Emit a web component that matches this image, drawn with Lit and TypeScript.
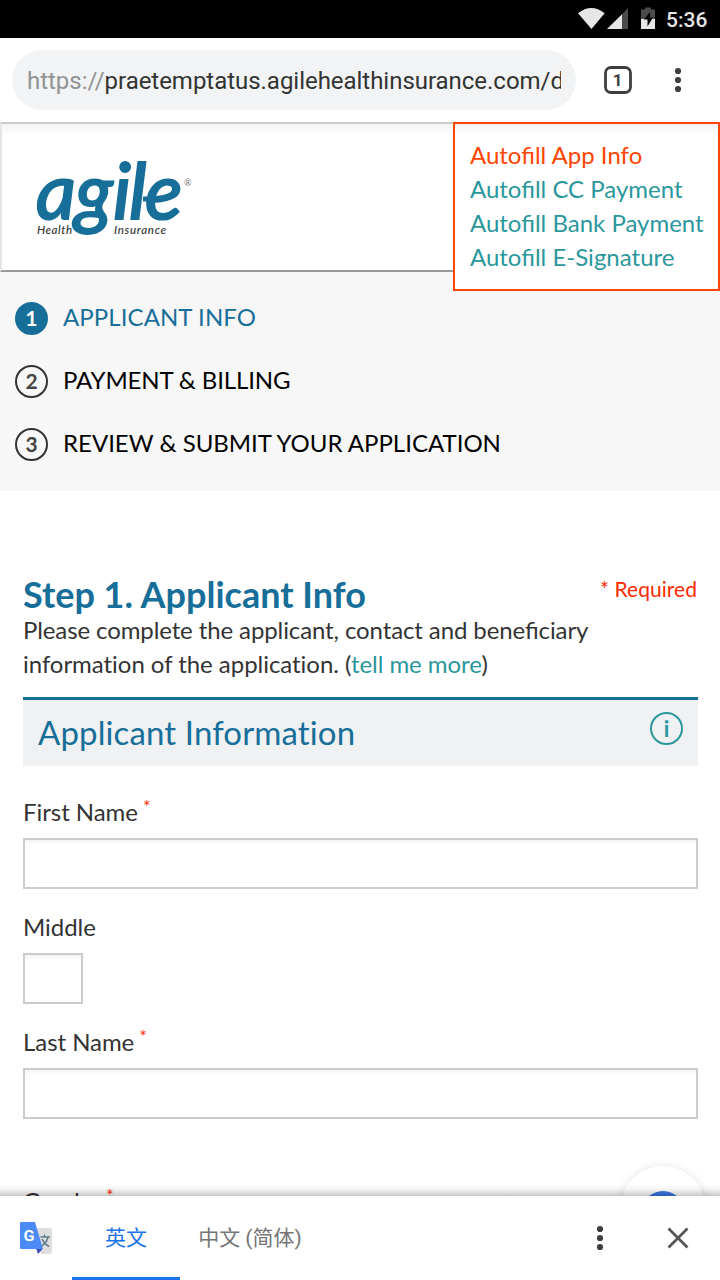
import { LitElement, html, css, svg, nothing } from "lit";
import { customElement, property } from "lit/decorators.js";

const dots = svg`<circle cx="15" cy="6" r="3.1"/><circle cx="15" cy="15" r="3.1"/><circle cx="15" cy="24" r="3.1"/>`;

@customElement("status-bar")
class StatusBar extends LitElement {
  static styles = css`
    :host { display: flex; height: 38px; background: #000; color: #e6e6e6; justify-content: flex-end; align-items: center; padding-right: 12px; font: 500 21px/38px Roboto, sans-serif; flex: none; }
    svg { display: block; margin-right: 10px; }
    .time { padding-top: 2px; width: 42px; white-space: nowrap; }
  `;
  render() {
    return html`
      <svg width="78" height="38" viewBox="578 0 78 38">
        <path d="M578 13.3Q591.3 2.8 604.7 13.3L591.5 29Z" fill="#e6e6e6"/>
        <path d="M622 14.2V29H607Z" fill="#e6e6e6"/>
        <path d="M622 14.2L628 8V29H622Z" fill="#4b4b4b"/>
        <path d="M645 7.5h6V9.5h4V19H641V9.5h4Z" fill="#4b4b4b"/>
        <path d="M641 19h14V29H641Z" fill="#e6e6e6"/>
        <path d="M650 12v5.500h3l-5.500 9v-7h-3.500Z" fill="#000"/>
      </svg>
      <span class="time">5:36</span>`;
  }
}

@customElement("address-bar")
class AddressBar extends LitElement {
  static styles = css`
    :host { display: flex; height: 84px; box-sizing: border-box; padding-left: 12px; align-items: center; flex: none; background: #fff; }
    .pill { width: 564px; height: 60px; box-sizing: border-box; border-radius: 30px; background: #f1f3f4; padding: 0 15px; font: 24px/62px Roboto, sans-serif; color: #333; }
    .url { display: block; overflow: hidden; white-space: nowrap; width: 534px; letter-spacing: -0.03px; }
    .scheme { color: #929394; }
    .tabs { margin-left: 27px; }
    .menu { margin-left: 30px; fill: #3c4043; }
  `;
  render() {
    return html`
      <div class="pill"><span class="url"><span class="scheme">https://</span>praetemptatus.agilehealthinsurance.com/d</span></div>
      <svg class="tabs" width="30" height="30" viewBox="0 0 30 30">
        <rect x="2.5" y="2.5" width="25" height="25" rx="5.500" fill="none" stroke="#3c4043" stroke-width="2.8"/>
        <text x="14.6" y="20.6" text-anchor="middle" font-family="Roboto, sans-serif" font-weight="700" font-size="17" fill="#3c4043">1</text>
      </svg>
      <svg class="menu" width="30" height="30" viewBox="0 0 30 30">${dots}</svg>`;
  }
}

@customElement("site-header")
class SiteHeader extends LitElement {
  static styles = css`
    :host { display: block; position: relative; height: 150px; box-sizing: border-box; border-top: 2px solid #cbcbcb; border-left: 2px solid #e5e5e5; border-bottom: 2px solid #999; background: linear-gradient(#f4f4f4, #fff 12px); flex: none; }
    .logo { display: block; margin: 26px 0 0 28px; overflow: visible; }
    .links { position: absolute; z-index: 1; right: 0; top: -2px; width: 267px; height: 169px; box-sizing: border-box; border: 2px solid #ff4500; background: linear-gradient(#f4f4f4, #fff 10px); padding: 14px 15px; display: flex; flex-direction: column; }
    .links a { color: #2a979d; line-height: 34px; white-space: nowrap; font-size: 24px; }
    .links .current { color: #ff4500; }
  `;
  render() {
    return html`
      <svg class="logo" width="180" height="96" viewBox="30 150 180 96" font-family="Lato, sans-serif" font-style="italic">
        <g fill="#176f99" stroke="#176f99" stroke-width="2.200" font-size="78" font-weight="400">
          <text x="36" y="219">a</text><text x="75" y="219">g</text><text x="113" y="219">i</text><text x="129" y="219">l</text><text x="145" y="219">e</text>
        </g>
        <path d="M143 199H154" fill="none" stroke="#176f99" stroke-width="5"/>
        <g fill="#333" font-size="11.5" font-weight="500">
          <text x="37" y="234" textLength="35">Health</text>
          <text x="114" y="234" textLength="52">Insurance</text>
        </g>
        <text x="184" y="186" font-size="9" font-style="normal" fill="#777">®</text>
      </svg>
      <nav class="links">
        <a class="current">Autofill App Info</a><a>Autofill CC Payment</a><a>Autofill Bank Payment</a><a>Autofill E-Signature</a>
      </nav>`;
  }
}

@customElement("step-list")
class StepList extends LitElement {
  static styles = css`
    :host { display: flex; flex-direction: column; gap: 30px; height: 219px; box-sizing: border-box; padding: 30px 15px 0; background: #f7f7f7; color: #000; flex: none; }
    .step { display: flex; gap: 15px; height: 33px; font-size: 24px; line-height: 29px; white-space: nowrap; }
    .num { width: 33px; height: 33px; box-sizing: border-box; border: 2px solid #333; border-radius: 50%; text-align: center; font-size: 21px; font-weight: 700; line-height: 28px; color: #444; }
    .on { color: #176f99; letter-spacing: 0.08px; }
    .on .num { background: #176f99; border-color: #176f99; color: #fff; }
    .mid { letter-spacing: -0.12px; }
  `;
  render() {
    return html`${["APPLICANT INFO", "PAYMENT & BILLING", "REVIEW & SUBMIT YOUR APPLICATION"].map(
      (t, i) => html`<div class="step ${["on", "mid", ""][i]}"><span class="num">${i + 1}</span><span>${t}</span></div>`
    )}`;
  }
}

@customElement("text-field")
class TextField extends LitElement {
  @property() label = "";
  @property({ type: Boolean }) required = false;
  @property({ type: Boolean }) short = false;
  static styles = css`
    :host { display: block; height: 115px; flex: none; }
    .label { display: flex; height: 42px; line-height: 32px; font-size: 24px; gap: 5px; letter-spacing: -0.05px; }
    .star { color: #ff2a00; font-size: 18px; line-height: 21px; }
    .box { height: 51px; box-sizing: border-box; border: 2px solid #ccc; background: linear-gradient(#f4f4f4, #fff 5px); }
    .short { width: 60px; }
  `;
  render() {
    return html`
      <div class="label"><span>${this.label}</span>${this.required ? html`<span class="star">*</span>` : nothing}</div>
      <div class="box ${this.short ? "short" : ""}"></div>`;
  }
}

@customElement("application-form")
class ApplicationForm extends LitElement {
  static styles = css`
    :host { display: flex; flex-direction: column; flex: 1; min-height: 0; overflow: hidden; padding: 81px 22px 0 23px; color: #333; }
    .top { display: flex; justify-content: space-between; height: 41px; flex: none; }
    .title { font-size: 36px; font-weight: 700; line-height: 44px; color: #176f99; }
    .req { font-size: 21px; line-height: 34px; color: #ff2a00; padding-right: 1px; letter-spacing: 0.05px; }
    .intro { height: 84px; flex: none; font-size: 24px; line-height: 34px; white-space: nowrap; letter-spacing: -0.04px; }
    .first { letter-spacing: -0.11px; font-feature-settings: "liga" 1; }
    .more { color: #2a979d; }
    .section { display: flex; justify-content: space-between; height: 69px; box-sizing: border-box; border-top: 3px solid #176f99; background: #f0f1f3; padding: 0 15px; margin-bottom: 30px; color: #176f99; font-size: 33px; line-height: 64px; letter-spacing: 0.12px; flex: none; }
    .info { margin-top: 12px; width: 33px; height: 33px; box-sizing: border-box; border: 2px solid #2a979d; border-radius: 50%; color: #2a979d; text-align: center; font-size: 22px; font-weight: 700; line-height: 29px; }
    .gender { margin-top: 44px; }
  `;
  render() {
    return html`
      <div class="top"><span class="title">Step 1. Applicant Info</span><span class="req">* Required</span></div>
      <div class="intro"><span class="first">Please complete the applicant, contact and beneficiary</span><br>information of the application. (<span class="more">tell me more</span>)</div>
      <div class="section"><span>Applicant Information</span><span class="info">i</span></div>
      <text-field label="First Name" required></text-field>
      <text-field label="Middle" short></text-field>
      <text-field label="Last Name" required></text-field>
      <text-field class="gender" label="Gender" required></text-field>`;
  }
}

@customElement("translate-bar")
class TranslateBar extends LitElement {
  static styles = css`
    :host { display: flex; position: relative; height: 84px; flex: none; background: #fff; font: 21px/84px Roboto, "Noto Sans CJK SC", sans-serif; color: #757575; }
    .shade { position: absolute; left: 0; right: 0; top: -11px; height: 11px; background: linear-gradient(rgba(0,0,0,0), rgba(0,0,0,.06) 45%, rgba(0,0,0,.22)); }
    .icon { margin: 25px 18px 0 19px; display: block; }
    .tab { box-sizing: border-box; width: 108px; height: 84px; text-align: center; white-space: nowrap; }
    .on { color: #1a73e8; border-bottom: 3px solid #1a73e8; }
    .other { width: 140px; }
    .menu { margin: 27px 0 0 auto; fill: #3c4043; }
    .close { margin: 27px 27px 0 48px; }
  `;
  render() {
    return html`
      <div class="shade"></div>
      <svg class="icon" width="35" height="35" viewBox="19 1221 35 35">
        <path d="M34 1228h16q2 0 2 2v22q0 2-2 2H41Z" fill="#dedede"/>
        <path d="M36 1248.5h7l-5 5.5Z" fill="#3f51b5"/>
        <path d="M40.500 1237h9.500M44.500 1234.500v2.500M48 1237q-1 5.500-7 9.500M42 1239q2 4.500 7 7.500" fill="none" stroke="#607d8b" stroke-width="1.500"/>
        <path d="M21 1222h14l8 27H21q-1 0-1-1v-25q0-1 1-1Z" fill="#4c8bf5"/>
        <text x="23.5" y="1240.500" font-family="Roboto, sans-serif" font-size="15" font-weight="700" fill="#fff" textLength="11" lengthAdjust="spacingAndGlyphs">G</text>
      </svg>
      <div class="tab on">英文</div><div class="tab other">中文 (简体)</div>
      <svg class="menu" width="30" height="30" viewBox="0 0 30 30">${dots}</svg>
      <svg class="close" width="30" height="30" viewBox="0 0 30 30"><path d="M5.500 5.500l19 19M24.500 5.500l-19 19" stroke="#555" stroke-width="2.700"/></svg>`;
  }
}

@customElement("app-root")
class AppRoot extends LitElement {
  static styles = css`
    :host { display: flex; flex-direction: column; position: relative; height: 1280px; width: 720px; overflow: hidden; background: #fff; font-family: Lato, sans-serif; }
    .bubble { position: absolute; left: 620px; top: 1166px; width: 86px; height: 86px; border-radius: 50%; background: #fff; box-shadow: 0 1px 10px rgba(0,0,0,.13); display: flex; justify-content: center; }
    .dot { margin-top: 25px; width: 44px; height: 44px; border-radius: 50%; background: #3b78e7; }
  `;
  render() {
    return html`
      <status-bar></status-bar>
      <address-bar></address-bar>
      <site-header></site-header>
      <step-list></step-list>
      <application-form></application-form>
      <div class="bubble"><div class="dot"></div></div>
      <translate-bar></translate-bar>`;
  }
}
